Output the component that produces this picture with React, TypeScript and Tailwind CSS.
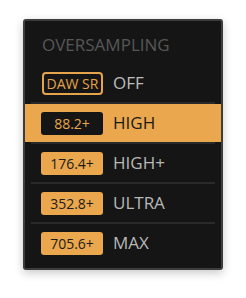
import React from "react";

const rows = [
  { badge: "88.2+", label: "HIGH", active: true },
  { badge: "176.4+", label: "HIGH+", active: false },
  { badge: "352.8+", label: "ULTRA", active: false },
  { badge: "705.6+", label: "MAX", active: false },
];

export default function App() {
  return (
    <div
      className="w-[246px] h-[298px] bg-white pt-[19px] pl-[23px]"
      style={{ fontFamily: "'Open Sans', Lato, sans-serif" }}
    >
      <div className="w-[200px] h-[251px] border-2 border-[#3d3d3d] rounded-[3px] bg-[#151515] shadow-[0_3px_10px_rgba(0,0,0,0.22)] flex flex-col">
        <div className="h-[43px] pl-[17px] pt-[13px] text-[17px] leading-[22px] font-medium text-[#575757]">
          OVERSAMPLING
        </div>
        <div className="h-[38px] flex items-center pl-[17px] gap-[10px]">
          <div className="w-[61px] h-[23px] rounded-[4px] border-2 border-[#e5a44b] flex items-center justify-center text-[14px] font-medium text-[#e5a44b]">
            DAW SR
          </div>
          <span className="text-[17px] font-medium text-[#bdbdbd]">OFF</span>
        </div>
        {rows.map((r) => (
          <React.Fragment key={r.label}>
            <div className="h-[2px] mx-[6px] bg-[#2a2a2a]" />
            <div
              className={
                r.active
                  ? "h-[38px] flex items-center pl-[16px] gap-[10px] bg-[#eaa74d]"
                  : "h-[38px] flex items-center pl-[16px] gap-[10px]"
              }
            >
              <div
                className={
                  r.active
                    ? "w-[62px] h-[23px] rounded-[3px] bg-[#151515] flex items-center justify-center text-[14px] font-medium text-[#eaa74d]"
                    : "w-[62px] h-[23px] rounded-[3px] bg-[#eaa74d] flex items-center justify-center text-[14px] font-medium text-[#1c1c1c]"
                }
              >
                {r.badge}
              </div>
              <span
                className={
                  r.active
                    ? "text-[17px] font-medium text-[#1a1a1a]"
                    : "text-[17px] font-medium text-[#b8b8b8]"
                }
              >
                {r.label}
              </span>
            </div>
          </React.Fragment>
        ))}
      </div>
    </div>
  );
}
